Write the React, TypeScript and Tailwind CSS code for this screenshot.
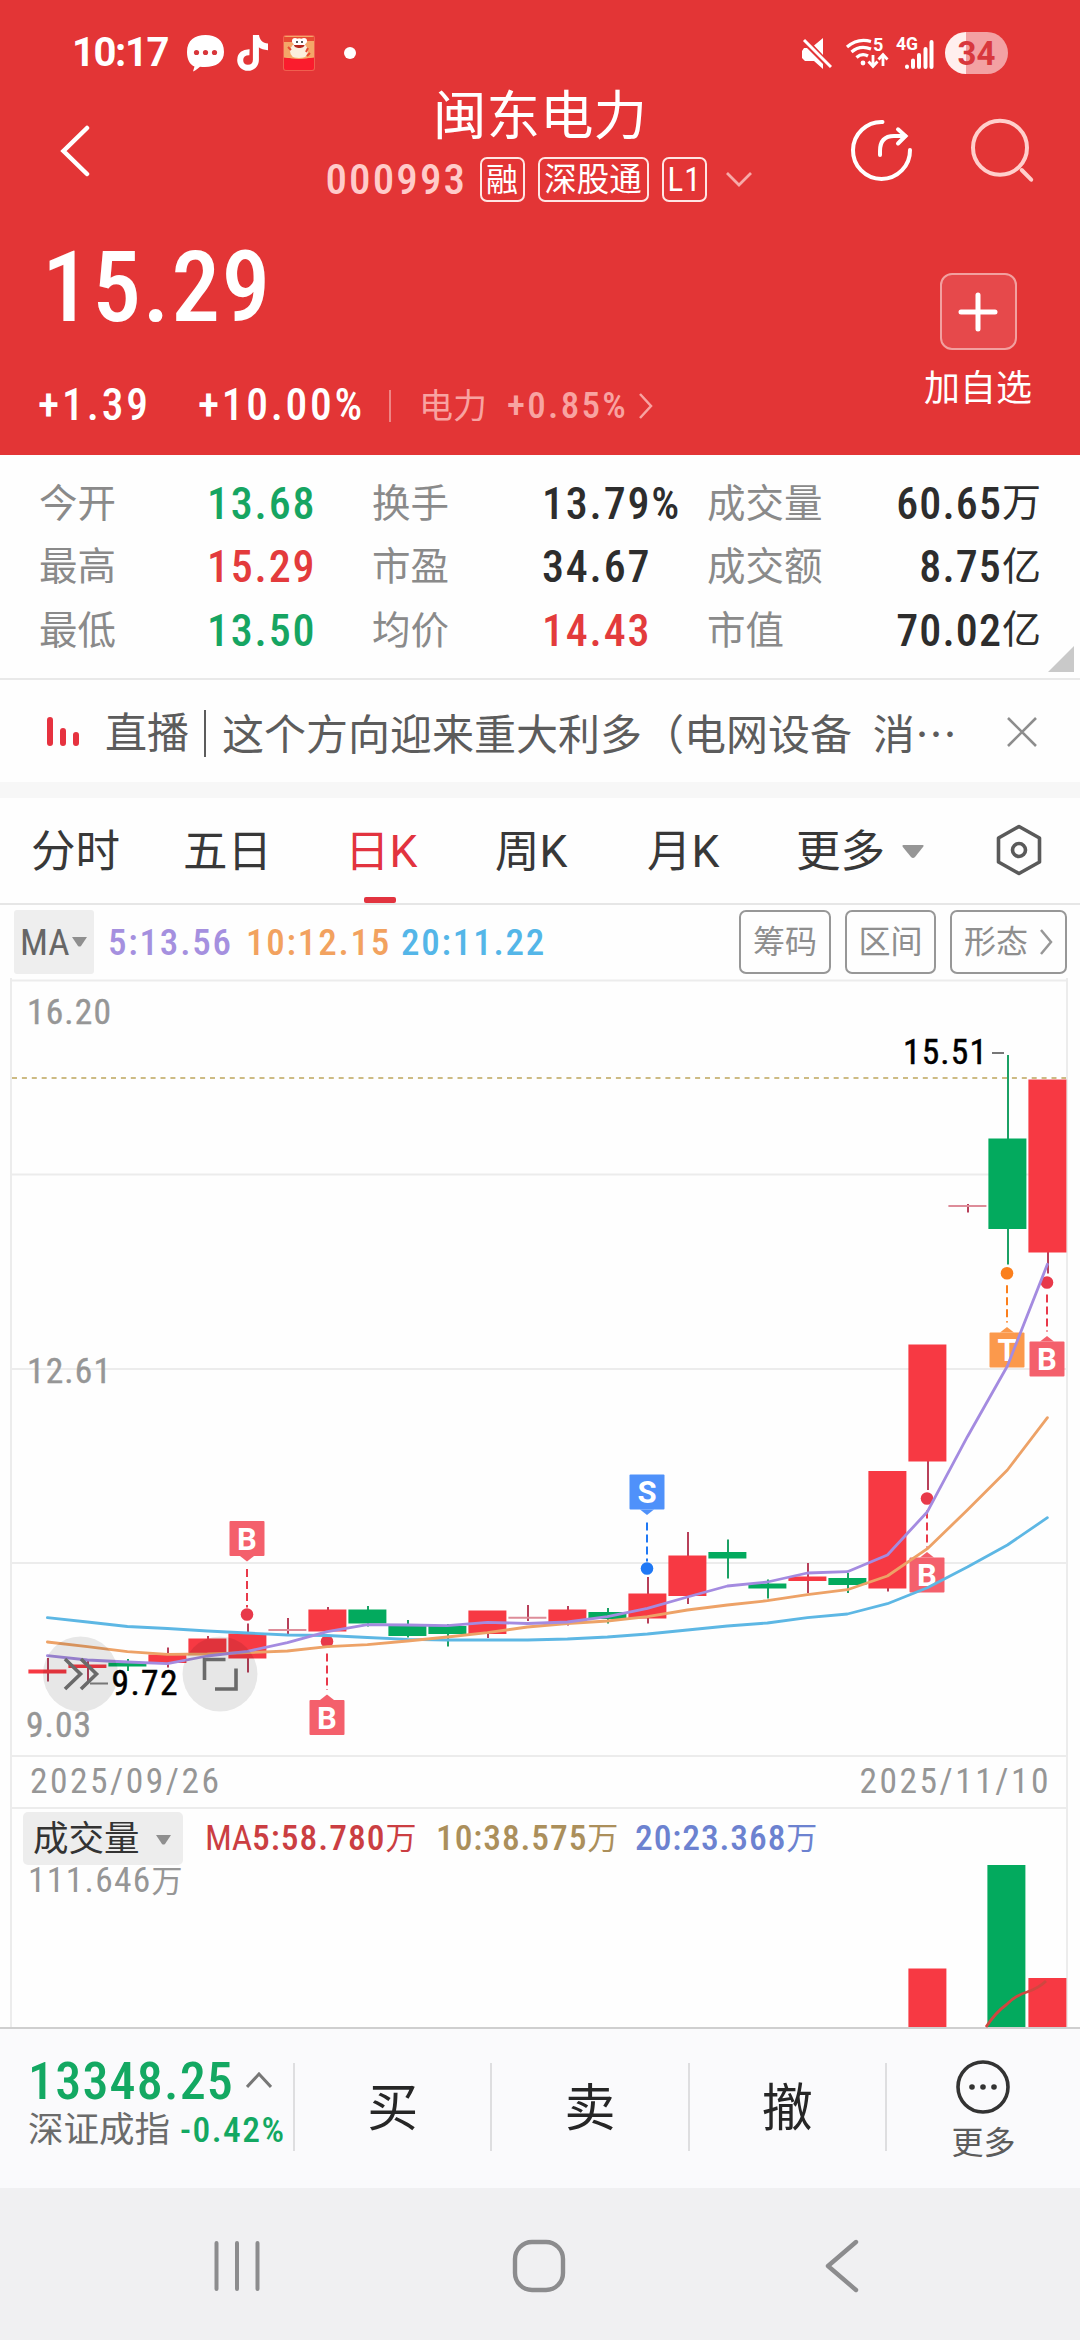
import * as React from 'react';

const RED = '#f73943';
const GREEN = '#03aa5e';

const STATS = [
  [
    { label: '今开', value: '13.68', color: 'text-[#16a562]' },
    { label: '换手', value: '13.79%', color: 'text-[#2d2d2d]' },
    { label: '成交量', value: '60.65', unit: '万', color: 'text-[#2d2d2d]' },
  ],
  [
    { label: '最高', value: '15.29', color: 'text-[#e33b3c]' },
    { label: '市盈', value: '34.67', color: 'text-[#2d2d2d]' },
    { label: '成交额', value: '8.75', unit: '亿', color: 'text-[#2d2d2d]' },
  ],
  [
    { label: '最低', value: '13.50', color: 'text-[#16a562]' },
    { label: '均价', value: '14.43', color: 'text-[#e33b3c]' },
    { label: '市值', value: '70.02', unit: '亿', color: 'text-[#2d2d2d]' },
  ],
];

type Candle = {
  up: boolean;
  body: [number, number];
  wick: [number, number];
};

// body = [top, bottom], wick = [high, low], in chart pixels
const CANDLES: Candle[] = [
  { up: true, body: [1669.5, 1673.5], wick: [1658, 1681.5] },
  { up: true, body: [1664.5, 1668], wick: [1660, 1681] },
  { up: false, body: [1662.5, 1666.5], wick: [1659, 1671] },
  { up: true, body: [1654.5, 1663], wick: [1647.5, 1667.5] },
  { up: true, body: [1638.5, 1653], wick: [1636, 1653] },
  { up: true, body: [1633.5, 1658.5], wick: [1623.5, 1672.5] },
  { up: true, body: [1630, 1630], wick: [1618, 1634] },
  { up: true, body: [1609.5, 1631.5], wick: [1607, 1631] },
  { up: false, body: [1609.5, 1623.5], wick: [1606, 1626.5] },
  { up: false, body: [1625.5, 1636], wick: [1620, 1637.5] },
  { up: false, body: [1626, 1634], wick: [1624, 1646.5] },
  { up: true, body: [1610.5, 1634], wick: [1611, 1638] },
  { up: true, body: [1617.7, 1617.7], wick: [1605, 1621] },
  { up: true, body: [1609.5, 1622], wick: [1606, 1625.5] },
  { up: false, body: [1612, 1619], wick: [1608, 1623.5] },
  { up: true, body: [1593.5, 1618.5], wick: [1577, 1623.5] },
  { up: true, body: [1555.5, 1596], wick: [1532, 1604] },
  { up: false, body: [1552, 1558.5], wick: [1539.5, 1578.5] },
  { up: false, body: [1583.5, 1588.5], wick: [1579.5, 1598.5] },
  { up: true, body: [1576.5, 1581], wick: [1563, 1593] },
  { up: false, body: [1578, 1585], wick: [1573, 1593] },
  { up: true, body: [1471, 1588.5], wick: [1472, 1591.5] },
  { up: true, body: [1344.5, 1461.5], wick: [1345, 1490] },
  { up: true, body: [1206, 1206], wick: [1204, 1212.5] },
  { up: false, body: [1138.5, 1229], wick: [1055, 1264.5] },
  { up: true, body: [1079.5, 1252.5], wick: [1080, 1273.5] },
];

const MA5 = [
  1655.7, 1660, 1662, 1663.7, 1656, 1651.3, 1642.7, 1631.7, 1624.7, 1625, 1625.7, 1622.3, 1623.5,
  1622, 1616.7, 1608.3, 1597, 1586, 1582, 1573, 1571.7, 1555, 1511.7, 1436.7, 1366, 1264.3,
];
const MA10 = [
  1642, 1646.7, 1651.7, 1654.3, 1654, 1652.7, 1651, 1646.7, 1644.7, 1641, 1637, 1632.7, 1627,
  1623.5, 1621, 1616.7, 1610, 1605, 1600.7, 1594.7, 1589.7, 1576, 1548.7, 1510, 1470, 1417.7,
];
const MA20 = [
  1617.7, 1622, 1626.5, 1628.5, 1631, 1633, 1635, 1635.5, 1637.5, 1639.3, 1640, 1640, 1640,
  1639, 1637, 1634, 1630, 1626, 1623, 1617.7, 1614, 1603.7, 1587.7, 1567, 1545, 1517.7,
];

type Marker = {
  text: string;
  x: number;
  boxTop: number;
  above: boolean;
  dot: number;
  box: string;
  line: string;
};

const MARKERS: Marker[] = [
  { text: 'B', x: 247, boxTop: 1521, above: true, dot: 1614.5, box: '#f4606c', line: '#e8394a' },
  { text: 'B', x: 327, boxTop: 1700, above: false, dot: 1641.5, box: '#f4606c', line: '#e8394a' },
  { text: 'S', x: 647, boxTop: 1474.5, above: true, dot: 1568.5, box: '#4f91fa', line: '#1f78f5' },
  { text: 'B', x: 927, boxTop: 1557.5, above: false, dot: 1498.5, box: '#f4606c', line: '#e8394a' },
  { text: 'T', x: 1007, boxTop: 1332.5, above: false, dot: 1273.3, box: '#fb994c', line: '#fb7f1c' },
  { text: 'B', x: 1047, boxTop: 1341.5, above: false, dot: 1282.5, box: '#f4606c', line: '#e8394a' },
];

const candleX = (i: number) => 47.4 + i * 40;

function toPoints(values: number[]): string {
  return values.map((y, i) => `${candleX(i)},${y}`).join(' ');
}

function StatusBar() {
  return (
    <div className="flex h-[106px] items-center pl-[72px] pr-[72px] font-['Roboto',sans-serif]">
      <span className="w-[115px] text-[40px] font-bold leading-none tracking-[-1.4px]">10:17</span>
      <svg width="37" height="37" viewBox="0 0 37 37">
        <path
          fill="#fff"
          d="M18.500 0C8 0 0 5 0 17c0 8 3 12.500 7.500 14.500L6 36.500c3-1.200 5-2.800 7-4.700C27 33.500 37 28 37 17 37 5 29 0 18.500 0z"
        />
        <g fill="#d8363a">
          <circle cx="9.500" cy="17.500" r="2.600" />
          <circle cx="18.500" cy="17.500" r="2.600" />
          <circle cx="27.500" cy="17.500" r="2.600" />
        </g>
      </svg>
      <svg className="ml-[13px]" width="31" height="36" viewBox="0 0 31 36">
        <path
          fill="none"
          stroke="#fff"
          strokeWidth="6"
          d="M12.500 17.200C7 17 3.200 20 3.200 25c0 4.500 3.300 7.800 7.700 7.800 4.600 0 8-3.300 8-8V0"
        />
        <path fill="#fff" d="M16 0h6c.6 5 3.700 8 9 8.600v6.600c-4-.1-7-1.300-10-3.400z" />
      </svg>
      <svg className="ml-[15px]" width="32" height="36" viewBox="0 0 32 36">
        <rect width="32" height="36" rx="3" fill="#f0604f" />
        <rect x="1" y="1" width="30" height="24" rx="2" fill="#f4a668" />
        <path fill="#e84a33" d="M1 2h30v4H22L16 3 9 7H1z" />
        <ellipse cx="16" cy="16" rx="9" ry="8" fill="#fbeedd" />
        <circle cx="12" cy="6" r="3" fill="#fff" />
        <circle cx="21" cy="6" r="3" fill="#fff" />
        <ellipse cx="16.500" cy="8" rx="6" ry="4.500" fill="#fff" />
        <circle cx="14" cy="7" r="1" fill="#222" />
        <circle cx="19" cy="7" r="1" fill="#222" />
        <path fill="#b5271c" d="M11 10h10.500c0 4-10.500 4-10.500 0z" />
        <path stroke="#e84a33" strokeWidth="2" d="M5 12l3 3M25 13l-2 4M27 18l-3 3" />
        <path fill="#fa1c2d" d="M1 22q15 3 30 0v11q0 2-2 2H3q-2 0-2-2z" />
        <path fill="none" stroke="#f6b06a" strokeWidth="1" d="M1 22q15 3 30 0" />
      </svg>
      <span className="ml-[29px] size-3 rounded-full bg-white" />

      <svg className="ml-auto" width="30" height="32" viewBox="0 0 30 32">
        <path fill="#fff" d="M21 1v17L12 8.500zM2 11h3l16 16v5l-9-8H3l-3-3v-7z" />
        <path stroke="#fff" strokeWidth="3" d="M2 3l27 27" />
      </svg>
      <svg className="ml-[14px] overflow-visible" width="42" height="32" viewBox="0 0 42 32">
        <g fill="none" stroke="#fff" strokeWidth="3.200">
          <path d="M1 10Q12 .5 25 4.500" />
          <path d="M5.500 15Q14 7.500 25 12" />
          <path d="M10.500 20.500Q16 15.500 22 19" />
          <path strokeWidth="2.800" d="M27 18v11M22.500 24.500 27 29.500l4.500-5M37 29V18M32.500 22.500l4.500-5 4.500 5" />
        </g>
        <circle cx="17" cy="26" r="2.400" fill="#fff" />
        <text x="27" y="14" fontSize="18" fontWeight="700" fill="#fff">5</text>
      </svg>
      <svg className="ml-[8px] overflow-visible" width="38" height="34" viewBox="0 0 38 34">
        <text x="0" y="14" fontSize="18" fontWeight="700" fill="#fff" textLength="22" lengthAdjust="spacingAndGlyphs">4G</text>
        <g stroke="#fff" strokeWidth="4" strokeLinecap="round">
          <path d="M11 31v-.5M17 31v-6.500M23 31V19M29.500 31V13M35.500 31V6" />
        </g>
      </svg>
      <span className="ml-[11px] flex h-[42px] w-[63px] items-center justify-center rounded-full bg-[linear-gradient(90deg,#ffefee_34%,#f3a1a3_34%)] text-[33px] font-bold leading-none text-[#d8383d]">
        34
      </span>
    </div>
  );
}

function Header() {
  return (
    <header className="h-[455px] bg-[#e33536] text-white">
      <StatusBar />
      <div className="flex h-[104px]">
        <div className="w-[300px] pl-[60px] pt-[19px]">
          <svg width="32" height="52" viewBox="0 0 32 52" fill="none" stroke="#fff" strokeWidth="4.500">
            <path strokeLinecap="round" d="M27 3 3.500 26 27 49" />
          </svg>
        </div>
        <div className="-mt-[19px] flex w-[480px] flex-col items-center">
          <h1 className="h-[60px] text-[53.500px] leading-[60px]">闽东电力</h1>
          <div className="mt-[9px] ml-[-3px] flex h-[46px] items-center">
            <span className="w-[139px] text-[43px] leading-none font-medium tracking-[2.100px] text-[#ffcbc9]">000993</span>
            <span className="ml-[15px] flex h-[45px] w-[45px] items-center justify-center rounded-[7px] border-2 border-[#ffe6e4] pt-[2px] text-[32px] leading-none">融</span>
            <span className="ml-[13px] flex h-[45px] w-[111px] items-center justify-center rounded-[7px] border-2 border-[#ffe6e4] pt-[2px] text-[32.500px] leading-none">深股通</span>
            <span className="ml-[13px] flex h-[45px] w-[45px] items-center justify-center rounded-[7px] border-2 border-[#ffe6e4] pl-[1px] text-[33px] leading-none tracking-[1px]">L1</span>
            <svg className="ml-[19px]" width="26" height="16" viewBox="0 0 26 16" fill="none" stroke="#f7aaa8" strokeWidth="2.800">
              <path d="M1 2l12 12L25 2" />
            </svg>
          </div>
        </div>
        <div className="flex w-[300px] gap-[57px] pl-[70px] pt-[12px]">
          <svg width="64" height="66" viewBox="0 0 64 66" fill="none" stroke="#fff" strokeWidth="4" strokeLinecap="round">
            <path d="M32.500 4A28.500 28.500 0 1 0 60 32" />
            <path d="M30 37v-4q0-15 14-15h11" />
            <path d="M48 11.300l7.500 6.700-7.500 7.500" />
          </svg>
          <svg width="64" height="66" viewBox="0 0 64 66" fill="none" stroke="#ffcfcc" strokeWidth="4" strokeLinecap="round">
            <circle cx="29" cy="29.700" r="27" />
            <path d="M50.700 52l9.500 9.700" />
          </svg>
        </div>
      </div>

      <div className="flex">
        <div className="w-[900px]">
          <div className="mt-[28px] h-[100px] pl-[42px] text-[97.500px] leading-[100px] font-medium tracking-[1.500px]">15.29</div>
          <div className="mt-[46px] flex h-[44px] items-center pl-[38px] font-medium">
            <span className="w-[160px] text-[43.500px] tracking-[2.900px]">+1.39</span>
            <span className="w-[191px] text-[43.500px] tracking-[2.700px]">+10.00%</span>
            <span className="h-8 w-[2px] bg-[#ee8584]" />
            <span className="ml-[28px] w-[88px] text-[34px] font-normal text-[#f8a3a1]">电力</span>
            <span className="w-[131px] text-[37px] tracking-[2.300px] text-[#f8a3a1]">+0.85%</span>
            <svg width="16" height="28" viewBox="0 0 16 28" fill="none" stroke="#f8a3a1" strokeWidth="2.500">
              <path d="M2 2l11 12L2 26" />
            </svg>
          </div>
        </div>
        <div className="flex w-[156px] flex-col items-center pt-[63px]">
          <span className="flex size-[77px] items-center justify-center rounded-[12px] border-2 border-[#f2a09f] bg-[#e6494b]">
            <svg width="40" height="40" viewBox="0 0 40 40" stroke="#fff" strokeWidth="5" strokeLinecap="round">
              <path d="M20 3v34M3 20h34" />
            </svg>
          </span>
          <span className="mt-[17px] text-[36px] leading-[44px]">加自选</span>
        </div>
      </div>
    </header>
  );
}

function Stats() {
  return (
    <section className="relative flex h-[225px] flex-col border-b-2 border-[#e9e9e9] pt-[17px]">
      {STATS.map((row) => (
        <div key={row[0].label} className="grid h-[63.500px] grid-cols-[168px_165px_170px_165px_371px] items-center pl-[39px] text-[44px] leading-none">
          {row.slice(0, 2).map((cell) => (
            <React.Fragment key={cell.label}>
              <span className="text-[38.500px] text-[#8a8a8a]">{cell.label}</span>
              <span className={`${cell.color} font-medium tracking-[1.800px]`}>{cell.value}</span>
            </React.Fragment>
          ))}
          <div className="flex items-center justify-between pr-[37px]">
            <span className="text-[38.500px] text-[#8a8a8a]">{row[2].label}</span>
            <span className={`${row[2].color} flex items-center font-medium tracking-[1.100px]`}>
              {row[2].value}
              <span className="text-[39px] font-normal tracking-normal">{row[2].unit}</span>
            </span>
          </div>
        </div>
      ))}
      <svg className="absolute bottom-[6px] right-[6px]" width="26" height="26" viewBox="0 0 26 26">
        <path fill="#c9c9c9" d="M26 0v26H0z" />
      </svg>
    </section>
  );
}

function NewsBar() {
  return (
    <section className="flex h-[118px] items-center border-b-[16px] border-[#f7f7f7] pl-[46px] pt-[5px] text-[42px] leading-none text-[#5c5c5c]">
      <svg className="-mt-1" width="34" height="32" viewBox="0 0 34 32" stroke="#e6323f" strokeWidth="6" strokeLinecap="round">
        <path d="M4 4v23M17 15v12M30 19v8" />
      </svg>
      <span className="ml-[25px] w-[84px]">直播</span>
      <span className="ml-[15px] h-[47px] w-[2px] bg-[#5c5c5c]" />
      <span className="ml-[16px] w-[738px] whitespace-pre font-['Roboto','Noto_Sans_CJK_SC',sans-serif]">
        这个方向迎来重大利多（电网设备{'  '}消<span className="font-['Noto_Sans_CJK_SC']">…</span>
      </span>
      <svg className="ml-[46px] -mt-[3px]" width="32" height="32" viewBox="0 0 32 32" stroke="#8d8d8d" strokeWidth="2.600">
        <path d="M2 2l28 28M30 2L2 30" />
      </svg>
    </section>
  );
}

function Tabs() {
  return (
    <nav className="flex h-[107px] items-center border-b-2 border-[#e6e6e6] pt-[4px] pl-[31px] font-['Roboto','Noto_Sans_CJK_SC',sans-serif] text-[44.500px] leading-none text-[#383838]">
      <span className="w-[152px]">分时</span>
      <span className="w-[162px]">五日</span>
      <span className="relative w-[150px] text-[#e2333f]">
        日K
        <i className="absolute left-[19px] top-[67px] h-[6px] w-[32px] rounded-[2px] bg-[#e2333f]" />
      </span>
      <span className="w-[152px]">周K</span>
      <span className="w-[149px]">月K</span>
      <span className="w-[106px]">更多</span>
      <svg className="-mt-[2px]" width="22" height="14" viewBox="0 0 22 14">
        <path fill="#969696" d="M1.500 0h19q2 0 .5 2l-8 10q-2 2-4 0L.8 2q-1-2 .7-2z" />
      </svg>
      <svg className="-mt-[5px] ml-[71px]" width="48" height="52" viewBox="0 0 48 52" fill="none" stroke="#5a5a5a" strokeWidth="3.600" strokeLinejoin="round">
        <path d="M24 2.500 44.500 14v24L24 49.500 3.500 38V14z" />
        <circle cx="24" cy="26" r="6.500" />
      </svg>
    </nav>
  );
}

function MaBar() {
  return (
    <div className="flex h-[73px] items-start pl-[14px] pt-[5px] text-[37px] leading-none">
      <span className="flex h-16 w-[80px] items-center rounded-[3px] bg-[#eeeeee] pl-[6px] text-[37px] text-[#666]">
        <span className="w-[52px]">MA</span>
        <svg width="15" height="10" viewBox="0 0 15 10">
          <path fill="#8f8f8f" d="M0 0h15L9 9q-1.500 1-3 0z" />
        </svg>
      </span>
      <div className="flex h-16 flex-1 items-center pl-[14px] pt-px font-medium tracking-[1.800px]">
        <span className="w-[138px] text-[#a590df]">5:13.56</span>
        <span className="w-[155px] text-[#f2a25f]">10:12.15</span>
        <span className="text-[#54b6e8]">20:11.22</span>
      </div>
      <div className="flex gap-[14px] pr-[13px] text-[32px] text-[#8e8e8e]">
        <span className="flex h-16 w-[92px] items-center justify-center rounded-[7px] border-2 border-[#979797]">筹码</span>
        <span className="flex h-16 w-[91px] items-center justify-center rounded-[7px] border-2 border-[#979797]">区间</span>
        <span className="flex h-16 w-[117px] items-center rounded-[7px] border-2 border-[#979797] pl-[12px]">
          形态
          <svg className="ml-[11px]" width="15" height="26" viewBox="0 0 15 26" fill="none" stroke="#979797" strokeWidth="2.500">
            <path d="M2 1l10 12L2 25" />
          </svg>
        </span>
      </div>
    </div>
  );
}

function MarkerShape({ marker }: { marker: Marker }) {
  const { x, boxTop, above, dot } = marker;
  const lineFrom = above ? boxTop + 48 : dot + 12;
  const lineTo = above ? dot - 7 : boxTop - 10;
  const tip = above
    ? `M${x - 7} ${boxTop + 35}h14l-7 5.500z`
    : `M${x - 7} ${boxTop}h14l-7-5.500z`;
  return (
    <g>
      <path d={`M${x} ${lineFrom}V${lineTo}`} stroke={marker.line} strokeWidth="2" strokeDasharray="8 4" />
      <circle cx={x} cy={dot} r="6.300" fill={marker.line} />
      <rect x={x - 17.500} y={boxTop} width="35" height="35" rx="1" fill={marker.box} />
      <path d={tip} fill={marker.box} />
      <text
        x={x}
        y={boxTop + 28.500}
        textAnchor="middle"
        fontSize="31"
        fontWeight="700"
        fill="#fff"
        className="font-['Roboto',sans-serif]"
      >
        {marker.text}
      </text>
    </g>
  );
}

function PriceChart() {
  return (
    <svg className="block overflow-visible" width="1054" height="779" viewBox="12 978 1054 779">
      <g stroke="#ececec" strokeWidth="2">
        <path d="M12 980.500H1066M12 1174.500H1066M12 1369H1066M12 1563H1066M12 1756H1066" />
      </g>
      <path d="M12 1078H1066" stroke="#cdbb84" strokeWidth="2" strokeDasharray="5 4.900" />

      {CANDLES.map(({ up, body, wick }, i) => {
        const x = candleX(i);
        const flat = body[0] === body[1];
        return (
          <g key={i}>
            <path d={`M${x + 0.6} ${wick[0]}V${wick[1]}`} stroke={up ? '#b8405a' : '#1ba165'} strokeWidth="2" />
            {flat ? (
              <path d={`M${x - 19} ${body[0]}h38`} stroke="#dd8c99" strokeWidth="2" />
            ) : (
              <rect x={x - 19} y={body[0]} width="38" height={body[1] - body[0]} fill={up ? RED : GREEN} />
            )}
          </g>
        );
      })}

      {MARKERS.map((marker) => (
        <MarkerShape key={`${marker.text}${marker.x}`} marker={marker} />
      ))}

      <g fill="none" strokeWidth="2.800" strokeLinejoin="round" strokeLinecap="round">
        <polyline points={toPoints(MA20)} stroke="#5db7e4" />
        <polyline points={toPoints(MA10)} stroke="#eda267" />
        <polyline points={toPoints(MA5)} stroke="#a48be0" />
      </g>

      <g fill="#000" fillOpacity="0.09">
        <circle cx="80.500" cy="1674" r="37.500" />
        <circle cx="220" cy="1674" r="37.500" />
      </g>
      <g fill="none" stroke="#6a6a6a" strokeWidth="3.600">
        <path d="M65 1659l15.500 15-15.500 15M81 1659l15.500 15-15.500 15" />
        <path d="M204.500 1680v-20.500h21M215 1689h21v-20.500" />
      </g>
      <path d="M90 1683.500h18M992 1053h12" stroke="#777" strokeWidth="2" />

      <g fontSize="35.500" fill="#969696" stroke="#969696" strokeWidth="0.400">
        <text x="27" y="1024" textLength="84">16.20</text>
        <text x="27" y="1382.500" textLength="84">12.61</text>
        <text x="26" y="1737" textLength="65">9.03</text>
      </g>
      <g fontSize="35.500" fill="#000" stroke="#000" strokeWidth="0.500">
        <text x="903" y="1064" textLength="84">15.51</text>
        <text x="111.500" y="1695" textLength="66">9.72</text>
      </g>
    </svg>
  );
}

function VolumePanel() {
  return (
    <div className="relative h-[218px]">
      <svg className="absolute inset-0 overflow-visible" width="1054" height="218" viewBox="12 1809 1054 218">
        <rect x="908.400" y="1968.500" width="38" height="58.500" fill={RED} />
        <rect x="987.400" y="1865" width="38" height="162" fill={GREEN} />
        <rect x="1028.400" y="1978" width="38" height="49" fill={RED} />
        <path d="M986 2027q10-15 20-22 10-10 21-13 12-4 19-11" fill="none" stroke="#cf4740" strokeWidth="2.800" />
      </svg>
      <div className="relative flex h-[56px] items-center pl-[11px] pt-[3px] text-[35.500px] leading-none">
        <span className="flex h-[53px] w-[160px] items-center rounded-[5px] bg-[#ededed] pl-[10px] pt-[2px] text-[35.500px] text-[#333]">
          成交量
          <svg className="ml-[16px]" width="15" height="10" viewBox="0 0 15 10">
            <path fill="#8f8f8f" d="M0 0h15L9 9q-1.500 1-3 0z" />
          </svg>
        </span>
        <span className="ml-[22px] flex w-[231px] items-center text-[#cb3e42]">
          <span className="w-[47px] tracking-[-0.500px]">MA</span>
          <span className="font-medium tracking-[1px]">5:58.780</span>
          <span className="text-[31px]">万</span>
        </span>
        <span className="flex w-[199px] items-center text-[#ab8f5b]">
          <span className="font-medium tracking-[0.900px]">10:38.575</span>
          <span className="text-[31px]">万</span>
        </span>
        <span className="flex items-center text-[#6c82d0]">
          <span className="font-medium tracking-[0.900px]">20:23.368</span>
          <span className="text-[31px]">万</span>
        </span>
      </div>
      <div className="relative flex h-[32px] items-center pl-[16px] text-[35.500px] leading-none tracking-[1.300px] text-[#969696]">
        111.646<span className="text-[31px] tracking-normal">万</span>
      </div>
    </div>
  );
}

function TradeBar() {
  return (
    <footer className="flex h-[161px] items-start border-t-2 border-[#cfcfcf] bg-[#fafafc] pt-[34px]">
      <div className="h-[92px] w-[293px] pl-[28px]">
        <div className="flex h-[38px] items-center text-[52px] leading-none font-medium text-[#13a862]">
          <span className="w-[205px] tracking-[1.200px]">13348.25</span>
          <svg className="ml-[13px] -mt-[5px]" width="26" height="16" viewBox="0 0 26 16" fill="none" stroke="#777" strokeWidth="3">
            <path d="M1 15 13 2l12 13" />
          </svg>
        </div>
        <div className="mt-[9px] flex h-[42px] items-center text-[35.500px] leading-none text-[#6b6b6b]">
          <span className="w-[152px]">深证成指</span>
          <span className="font-medium tracking-[1.500px] text-[#13a862]">-0.42%</span>
        </div>
      </div>
      {['买', '卖', '撤'].map((label) => (
        <div key={label} className="flex h-[88px] w-[197.300px] items-center justify-center border-l-2 border-[#dedee0] pt-[2px] text-[51px] leading-none text-[#262626]">
          {label}
        </div>
      ))}
      <div className="flex h-[88px] flex-1 flex-col items-center border-l-2 border-[#dedee0]">
        <svg className="-mt-1 shrink-0" width="56" height="56" viewBox="0 0 56 56">
          <circle cx="28" cy="28" r="25" fill="none" stroke="#333" strokeWidth="3.600" />
          <g fill="#333">
            <circle cx="17" cy="28" r="2.800" />
            <circle cx="28" cy="28" r="2.800" />
            <circle cx="39" cy="28" r="2.800" />
          </g>
        </svg>
        <span className="mt-[8px] text-[32px] leading-[40px] text-[#5c5c5c]">更多</span>
      </div>
    </footer>
  );
}

function SystemNav() {
  return (
    <div className="flex h-[152px] items-center bg-[#f0f0f2] pl-[212px] pt-[4px]">
      <svg width="50" height="54" viewBox="0 0 50 54" stroke="#8c8c8e" strokeWidth="4" strokeLinecap="round">
        <path d="M4.500 4v46M25 4v46M45.500 4v46" />
      </svg>
      <svg className="ml-[250px]" width="54" height="54" viewBox="0 0 54 54" fill="none" stroke="#8c8c8e" strokeWidth="4.400">
        <rect x="3" y="3" width="48" height="48" rx="17" />
      </svg>
      <svg className="ml-[258px]" width="36" height="54" viewBox="0 0 36 54" fill="none" stroke="#8c8c8e" strokeWidth="4.400" strokeLinecap="round" strokeLinejoin="round">
        <path d="M32 3 4 27l28 24" />
      </svg>
    </div>
  );
}

export default function App(): React.JSX.Element {
  return (
    <div className="h-[2340px] w-[1080px] overflow-hidden bg-[#fefefe] font-['Roboto_Condensed','Noto_Sans_CJK_SC',sans-serif]">
      <Header />
      <Stats />
      <NewsBar />
      <Tabs />
      <MaBar />
      <div className="ml-[10px] mr-[12px] border-x-2 border-[#ececec]">
        <PriceChart />
        <div className="flex h-[52px] items-center justify-between border-b-2 border-[#ececec] pl-[18px] pr-[15px] text-[35.500px] leading-none tracking-[2.500px] text-[#969696]">
          <span>2025/09/26</span>
          <span>2025/11/10</span>
        </div>
        <VolumePanel />
      </div>
      <TradeBar />
      <SystemNav />
    </div>
  );
}
